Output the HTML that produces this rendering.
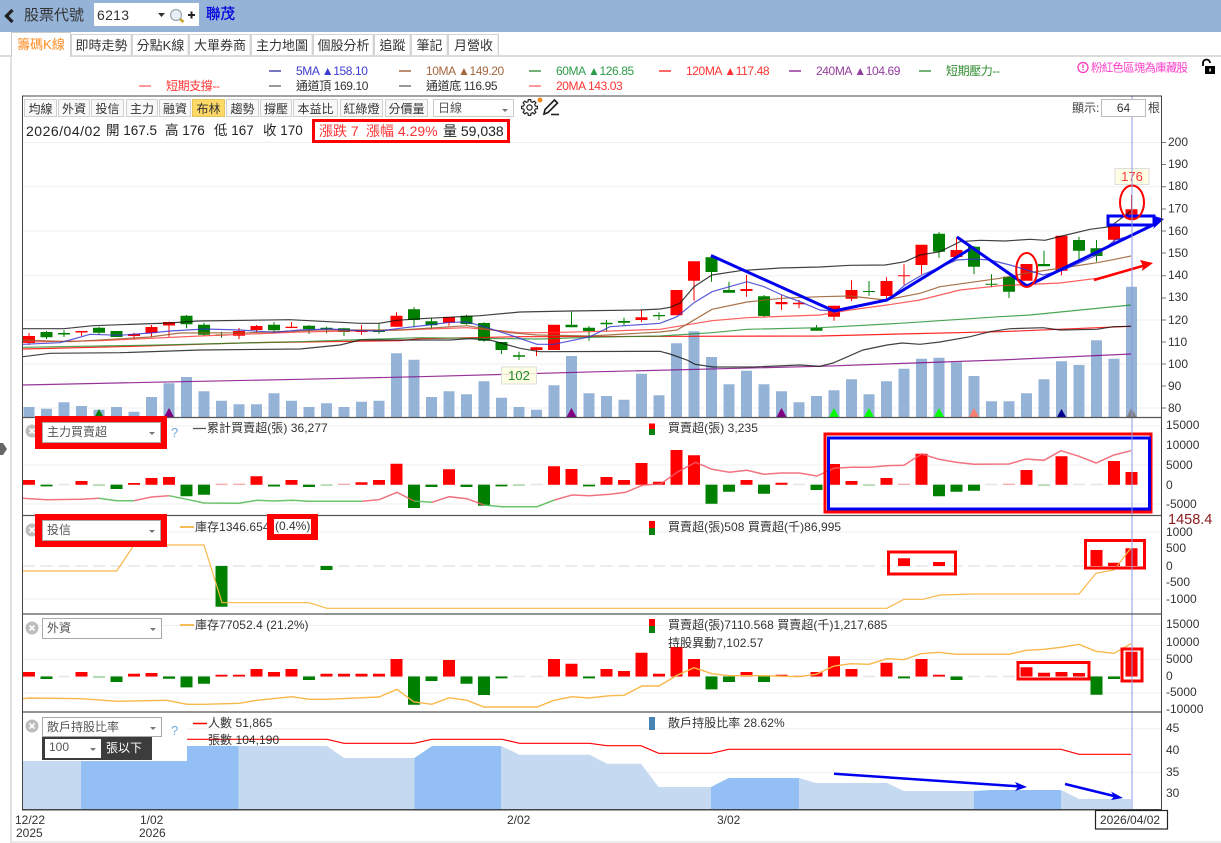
<!DOCTYPE html>
<html lang="zh-Hant"><head><meta charset="utf-8"><title>股票代號 6213 聯茂</title>
<style>
html,body{margin:0;padding:0;background:#fff}
body{width:1221px;height:843px;overflow:hidden;position:relative;font-family:"Liberation Sans","Noto Sans CJK TC",sans-serif;color:#333}
.a{position:absolute;white-space:nowrap}
.tab{position:absolute;top:34px;height:21px;line-height:21px;background:#fff;border:1px solid #d4d4d4;border-bottom:0;box-sizing:border-box;text-align:center;font-size:13px;color:#333;box-shadow:inset -1px 0 0 #eee}
.btn{position:absolute;top:99px;height:18px;line-height:18px;background:#f8f8f8;border:1px solid #d0d0d0;box-sizing:border-box;text-align:center;font-size:12px;color:#333}
.sel{position:absolute;left:42px;width:120px;height:21px;line-height:19px;background:#fff;border:1px solid #a9a9a9;box-sizing:border-box;padding-left:4px;font-size:12px;color:#555}
.sel:after{content:"";position:absolute;right:5px;top:9px;border:3px solid transparent;border-top:3px solid #777}
svg text{font-family:"Liberation Sans","Noto Sans CJK TC",sans-serif}
</style></head><body>
<div class="a" style="left:0;top:0;width:1221px;height:32px;background:#95b3d7"></div>
<svg class="a" style="left:2px;top:9px" width="14" height="15"><path d="M10.500 1L4.500 7L10.500 13" fill="none" stroke="#222" stroke-width="3.300"/></svg>
<div class="a" style="left:24px;top:5px;font-size:15px;line-height:22px;color:#333">股票代號</div>
<div class="a" style="left:94px;top:3px;width:105px;height:23px;background:#fff"></div>
<div class="a" style="left:97px;top:6px;font-size:14px;line-height:18px;color:#333;letter-spacing:.3px">6213</div>
<svg class="a" style="left:155px;top:6px" width="44" height="18"><path d="M3 7h7l-3.500 4z" fill="#333"/><circle cx="21" cy="9" r="5.500" fill="#e8eef5" stroke="#9aa" stroke-width="1.200"/><path d="M25 13l3.500 3" stroke="#c9a227" stroke-width="2.500"/><path d="M33 9h7M36.500 5.500v7" stroke="#222" stroke-width="2"/></svg>
<div class="a" style="left:206px;top:5px;font-size:14.500px;line-height:20px;color:#0000e0;-webkit-text-stroke:.3px #0000e0">聯茂</div>

<div class="a" style="left:0;top:55px;width:1221px;height:2px;background:#dcdcdc"></div>
<div class="a" style="left:10px;top:56px;width:2px;height:787px;background:#e2e2e2"></div>
<div class="a" style="left:12px;top:841px;width:1209px;height:2px;background:#ececec"></div>
<div class="tab" style="left:11px;top:32px;width:60px;height:25px;line-height:23px;color:#ff8a1f;border-color:#ccc;box-shadow:none;z-index:2">籌碼K線</div>
<div class="tab" style="left:71px;width:61px">即時走勢</div>
<div class="tab" style="left:132px;width:57px">分點K線</div>
<div class="tab" style="left:189px;width:62px">大單券商</div>
<div class="tab" style="left:251px;width:62px">主力地圖</div>
<div class="tab" style="left:313px;width:61px">個股分析</div>
<div class="tab" style="left:374px;width:37px">追蹤</div>
<div class="tab" style="left:411px;width:37px">筆記</div>
<div class="tab" style="left:448px;width:51px">月營收</div>

<svg class="a" style="left:0;top:0" width="1221" height="843" viewBox="0 0 1221 843" font-size="12">
<!-- legend -->
<g stroke-width="1.200" fill="none">
<path d="M269 71h12" stroke="#1a1a9a"/><path d="M399 71h12" stroke="#8b4513"/><path d="M529 71h12" stroke="#1a7f1a"/><path d="M659 71h12" stroke="#f00"/><path d="M789 71h12" stroke="#800080"/><path d="M919 71h12" stroke="#1a7f1a"/>
<path d="M139 86h12" stroke="#f55"/><path d="M269 86h12" stroke="#555"/><path d="M399 86h12" stroke="#555"/><path d="M529 86h12" stroke="#f55"/>
</g>
<g letter-spacing="-.4">
<text x="296" y="75" fill="#3b3bd0">5MA ▲158.10</text><text x="426" y="75" fill="#a5673f">10MA ▲149.20</text><text x="556" y="75" fill="#2e9b4a">60MA ▲126.85</text><text x="686" y="75" fill="#f33">120MA ▲117.48</text><text x="816" y="75" fill="#943c9e">240MA ▲104.69</text><text x="946" y="75" fill="#2e8b2e">短期壓力--</text>
<text x="166" y="90" fill="#f33">短期支撐--</text><text x="296" y="90" fill="#333">通道頂 169.10</text><text x="426" y="90" fill="#333">通道底 116.95</text><text x="556" y="90" fill="#f33">20MA 143.03</text>
</g>
<circle cx="1083" cy="67.500" r="5" fill="none" stroke="#ff33bb" stroke-width="1.300"/><path d="M1083 64.500v3.500M1083 69v1.300" stroke="#ff33bb" stroke-width="1.300"/>
<text x="1091" y="71.500" fill="#ff40c8" font-size="11.500" textLength="97">粉紅色區塊為庫藏股</text>
<path d="M1203 66v-3a3.500 3.500 0 0 1 7 0" fill="none" stroke="#000" stroke-width="1.800"/><rect x="1205" y="66" width="10" height="8" fill="#000"/><rect x="1209.300" y="68.500" width="1.500" height="3" fill="#fff"/>

<!-- frame -->
<rect x="22.500" y="95.500" width="1139" height="714.500" fill="#fff"/>
<!-- gridlines -->
<path d="M23 142.500H1161M23 186.700H1161M23 231H1161M23 275.700H1161M23 320H1161M23 364H1161M23 408H1161M23 426H1161M23 465H1161M23 504H1161M23 532H1161M23 599H1161M23 625.500H1161M23 659.500H1161M23 693H1161M23 728.700H1161M23 772.300H1161" stroke="#efefef" fill="none"/>
<!-- volume -->
<path stroke="#95b3d7" stroke-width="11" fill="none" d="M29 417V407M46.500 417V408.700M64 417V402.300M81.500 417V406M99 417V409.700M116.500 417V407M134 417V411.700M151.500 417V397M169 417V383.300M186.500 417V377M204 417V391.300M221.500 417V400.700M239 417V404.300M256.500 417V404.300M274 417V393.300M291.500 417V400.700M309 417V407M326.500 417V403.300M344 417V407M361.500 417V401.700M379 417V400.700M396.500 417V353.300M414 417V359.700M431.500 417V397M449 417V391.300M466.500 417V394.300M484 417V381.300M501.500 417V397.700M519 417V407M536.500 417V409.700M554 417V385.300M571.500 417V356M589 417V393.300M606.500 417V396M624 417V399.700M641.500 417V373.700M659 417V395.300M676.500 417V343.300M694 417V331.300M711.500 417V357M729 417V384.300M746.500 417V370.700M764 417V384.300M781.500 417V391.300M799 417V402.300M816.500 417V396M834 417V390.300M851.500 417V379.300M869 417V394.300M886.500 417V381.300M904 417V368.700M921.500 417V358.700M939 417V357.700M956.500 417V362.300M974 417V376M991.500 417V401.300M1009 417V401.300M1026.500 417V393.300M1044 417V379.300M1061.500 417V361.300M1079 417V365M1096.500 417V340.300M1114 417V358.700M1131.500 417V286.700"/>
<!-- signal triangles -->
<path d="M99 409l4.500 8h-9z" fill="#0a7d0a"/><path d="M169 408l5 9h-10z" fill="#800080"/><path d="M571.500 408l5 9h-10z" fill="#800080"/><path d="M781.500 408l5 9h-10z" fill="#800080"/><path d="M834 408l5 9h-10z" fill="#0f0"/><path d="M869 408l5 9h-10z" fill="#0f0"/><path d="M939 408l5 9h-10z" fill="#0f0"/><path d="M974 408l5 9h-10z" fill="#fa8072"/><path d="M1061.500 409l4.500 8h-9z" fill="#00008b"/><path d="M1131.500 408l5 9h-10z" fill="#808080"/>
<!-- candles wicks -->
<path stroke="#f00" stroke-width="1" fill="none" d="M29 333V345M81.500 331V336M134 332.700V339M151.500 325V337M169 321.700V336.700M239 328V339M256.500 325V332M291.500 322V328.300M361.500 325V335M396.500 312.300V326.700M449 317V325.700M536.500 347V356M641.500 310V322M694 261.300V300.700M746.500 275V296.700M781.500 295.300V310M799 300V308.300M834 305.700V320.700M851.500 280.300V301M886.500 277.300V300M904 264.300V285M921.500 244.700V274.300M956.500 237.300V257M1061.500 235.700V275.300M1114 224V242.700M1131.500 195V219"/>
<path stroke="#f00" stroke-width="12" fill="none" d="M29 336V343M81.500 331V332.500M134 334V336M151.500 327V333M169 322V325.500M239 331V335.700M256.500 326V330M291.500 326.700V328M361.500 330V332M396.500 315.700V326.700M449 317V322.700M536.500 347.300V350M554 324.700V350M641.500 317.300V320M676.500 290V315.300M694 261.300V280.700M746.500 289V291M781.500 302V304.300M799 302.700V304.300M834 305.700V316.700M851.500 290V298.700M886.500 281V296M904 275.300V276.300M921.500 244.700V265M956.500 250V257M1026.500 264V280.700M1061.500 235.700V270.700M1114 224V239.700M1131.500 209.300V219"/>
<path stroke="#008000" stroke-width="1" fill="none" d="M46.500 331V339M64 330.300V337M99 326.700V335M116.500 331V337M186.500 315V328.300M204 322.700V336M221.500 331.700V337.700M274 322V332.700M309 325V334M326.500 326.700V333.300M344 327.700V336M379 323.300V333.700M414 307.300V326.700M431.500 317.700V329.300M466.500 314.700V324.700M484 322.300V341.700M501.500 342V354M519 351.700V360M571.500 311.700V327.300M589 326V340.700M606.500 320V331.700M624 317.700V325.700M659 312.300V320M711.500 257.300V281.700M729 281.700V292.700M764 295V317.300M816.500 325V330.700M869 281V295.700M939 232V257.700M974 246V274.300M991.500 274.300V287.300M1009 276.700V298M1044 250.700V266.300M1079 236.700V261.700M1096.500 240V261.700"/>
<path stroke="#008000" stroke-width="12" fill="none" d="M46.500 332V337.300M64 333V334.500M99 327.700V332.700M116.500 331V337M186.500 315.700V324.300M204 324.700V334.700M221.500 334.500V335.500M274 324.700V330.300M309 325.700V329.300M326.500 327.700V329M344 328.300V332M379 331V332M414 309.300V320M431.500 321.300V325.300M466.500 315.700V324M484 323V340.700M501.500 342V350M519 355.300V356.700M571.500 324.700V327.300M589 327.700V331M606.500 322.700V324.300M624 321V322.700M659 315V316.300M711.500 257.300V272M729 290V292.700M764 296.300V316M816.500 327.700V330.700M869 291V292M939 233.700V251.700M974 246.700V266.700M991.500 283.700V284.700M1009 276.700V291.700M1044 264V266.300M1079 240V250.700M1096.500 248.300V256"/>
<!-- MA & Bollinger lines -->
<g fill="none" stroke-width="1.200">
<path stroke="#800080" opacity=".8" d="M23 385L150 382.300L300 379.300L420 376.700L600 371.700L820 366.300L1000 360L1131 354"/>
<path stroke="#f00" opacity=".85" d="M23 349L120 346.700L250 342.700L400 340.700L420 338.700L520 336.700L820 336L900 334L1000 331.700L1131 326.300"/>
<path stroke="#1f8f2a" opacity=".8" d="M23 347.300L160 345L300 341.700L400 338.300L420 337.700L540 339L590 337.300L660 336L712 332.700L747 329.300L820 327.700L900 323.300L1000 316.700L1030 315L1131 305"/>
<path stroke="#f33" opacity=".8" d="M23 342L100 340.700L200 336L300 332L400 330L467 327.700L520 332.700L537 332.700L590 331.700L660 329.300L712 320.700L747 317.700L820 315L850 310L887 305L920 300L960 290L1000 285.700L1060 283L1097 278.300L1131 270"/>
<path stroke="#9a5a2a" opacity=".85" d="M23 340L70 341.700L150 337L180 333L250 332.700L320 330L400 330L467 325.700L510 332.700L537 335L590 336L660 332L677 330L712 309.300L747 302L782 298.300L820 296.700L850 296L885 300L920 293.300L940 286.700L1000 278.300L1027 273L1062 268L1097 262.700L1115 259.300L1131 256"/>
<path stroke="#3030d0" opacity=".8" d="M23 344.300L60 342.700L70 340L90 334.300L120 335.300L150 333L170 331L205 329L240 330L275 332.300L300 330L330 329L360 330.700L380 331L400 328.300L420 326L450 322.300L467 322L484 326.700L510 335L537 344.300L554 344.300L590 336.700L610 326.700L660 323.300L677 316.700L694 302.700L712 291.700L747 281.700L764 286.700L782 295L800 301.700L820 310L834 311L887 300.700L905 285L922 275L957 260L974 259L990 260L1010 265L1027 270L1043 275L1062 270.700L1097 255L1115 240L1131 235.600"/>
<path stroke="#111" opacity=".8" d="M23 328.700L64 328.700L93 325.700L169 323L198 321L290 319.700L360 323.300L379 323.300L397 320.300L420 318.700L480 315.700L520 312L570 311L640 310L660 309L670 307.300L680 303.300L694 286.700L712 275L740 270.700L780 268L820 267L850 265.300L885 265L905 261.700L920 255L940 251.700L960 241.700L980 240.300L1005 241L1030 239.300L1045 240.300L1062 236L1090 229.300L1110 226.700L1131 211"/>
<path stroke="#111" opacity=".8" d="M23 356.700L50 353.300L120 352.700L200 350L300 349L340 345L360 340L450 340L470 338.700L490 340L520 348.300L540 351.700L660 351.300L670 354L687 360L695 364.300L713 367L753 367L800 365L820 366.300L833 363L863 350L887 345L902 343L920 344.300L940 342L970 336.700L990 331.700L1010 328.700L1043 327.700L1060 330L1097 329.300L1113 326.700L1131 326.300"/>
</g>
<!-- tooltips -->
<rect x="501.500" y="367" width="35" height="17" fill="#ffffe0" fill-opacity=".85" stroke="#ddd"/><text x="519" y="380" fill="#1d8a2a" font-size="13" text-anchor="middle">102</text>
<rect x="1115" y="168.500" width="34" height="16" fill="#ffffe6" stroke="#ddd"/><text x="1132" y="181" fill="#f33" font-size="13" text-anchor="middle">176</text>
<!-- blue annotations -->
<g fill="none" stroke="#0000f0">
<path stroke-width="3" d="M711 255.500L834 311L887 300L970 249"/>
<path stroke-width="3" d="M957 237L1027 286L1157 223"/>
<path fill="#0000f0" stroke="none" d="M1164 219L1151 215L1156 223L1153 229z"/>
<rect x="1108" y="216" width="46" height="9" stroke-width="3"/>
</g>
<g fill="none" stroke="#f00" stroke-width="2"><ellipse cx="1132" cy="202.500" rx="12" ry="17"/><ellipse cx="1026.700" cy="270" rx="10.500" ry="17"/></g>
<path d="M1094 280L1146 265" stroke="#f00" stroke-width="2.500" fill="none"/><path d="M1153 263L1140 260L1143 266L1142 271z" fill="#f00"/>

<!-- panel 1 -->
<path stroke="#e6e6e6" stroke-width="1.500" stroke-dasharray="12 5.500" d="M23 484.500H1132" fill="none"/>
<path stroke="#f00" stroke-width="12" fill="none" d="M29 480V484.700M81.500 481V484.700M134 483V484.700M151.500 478V484.700M169 477V484.700M256.500 476.300V484.700M291.500 480V484.700M361.500 482.300V484.700M379 480V484.700M396.500 463.700V484.700M449 469.300V484.700M554 466.300V484.700M571.500 469V484.700M606.500 477V484.700M624 480V484.700M641.500 463V484.700M659 481.700V484.700M676.500 450V484.700M694 455.300V484.700M746.500 480V484.700M781.500 482.700V484.700M834 464V484.700M851.500 481V484.700M886.500 478V484.700M921.500 453.700V484.700M1026.500 470V484.700M1061.500 456.300V484.700M1114 461V484.700M1131.500 472V484.700"/>
<path stroke="#ff9a9a" stroke-width="12" fill="none" d="M221.500 483.700V484.700M239 483.700V484.700M344 483.700V484.700M904 483.700V484.700M1009 483.700V484.700"/>
<path stroke="#008000" stroke-width="12" fill="none" d="M46.500 484.700V486.400M116.500 484.700V489M186.500 484.700V496.300M204 484.700V494.700M274 484.700V486.500M309 484.700V487M414 484.700V508M431.500 484.700V487M466.500 484.700V487M484 484.700V505.700M501.500 484.700V486.400M589 484.700V486.400M711.500 484.700V503.700M729 484.700V491.700M764 484.700V493.700M816.500 484.700V490M939 484.700V496.300M956.500 484.700V491.700M974 484.700V490.700"/>
<path stroke="#8fd08f" stroke-width="12" fill="none" d="M99 484.700V485.700M326.500 484.700V485.700M519 484.700V485.700M869 484.700V485.700M1044 484.700V485.700"/>
<g fill="none" stroke-width="1.500">
<path stroke="#f05a6a" opacity=".85" d="M23 498.300L46.500 499.700L81.500 499.300L99 498.300M134 500.700L151.500 497L169 495.700M362 501.300L379 499.700L397 492.300L414 501M432 502.300L449 496.700L467 498.700L484 505M554.500 500L572 495L589.500 495.700L610 494.300L625.600 492.300L643 485L660.600 484L678 471.700L695.600 462.300L712 469.300L729.500 472.300L747 470.300L764 474.300L781 473L799 473L817 476L834 468.300L851 467.300L869.500 467.300L886.600 465.700L904 465.300L921.700 454L939 459.300L956 462.300L974 464.300L1009 464L1026 459L1044 460.300L1061 450.700L1079 456.300L1096 463L1114 455L1131 450.700"/>
<path stroke="#5cbd5c" opacity=".9" d="M99 498.300L116.700 500.700L134 500.700M169 495.700L186.800 499.300L204 503L239 503.300L256.800 500.300L274 501L292 500.300L309 501.300L362 501.300M414 501L432 502.300M484 505L502 506.700L537 506.700L554.500 500"/>
</g>
<g fill="none"><rect x="825" y="434" width="326" height="78" stroke="#f00" stroke-width="3"/><rect x="828.500" y="438" width="321" height="71" stroke="#0000f0" stroke-width="3"/></g>

<!-- panel 2 -->
<path stroke="#e6e6e6" stroke-width="1.500" stroke-dasharray="12 5.500" d="M23 566H1132" fill="none"/>
<path stroke="#008000" stroke-width="12" fill="none" d="M221.500 566V606.700M326.500 566V570"/>
<path stroke="#f00" stroke-width="12" fill="none" d="M904 558.300V566M939 562V566M1096.500 550V566M1114 562.700V566M1131.500 548.300V566"/>
<path stroke="#f9b84a" stroke-width="1.200" fill="none" d="M23 571L116.700 571L134 545L204 545L222 602.700L309 602.700L327 608.300L887 608.300L904 599.300L923 599.300L940 595L974 594L1079 594L1096 573.300L1114 570L1131 548"/>
<g fill="none" stroke="#f00" stroke-width="3"><rect x="888.500" y="552" width="67" height="22"/><rect x="1085.500" y="540.500" width="59" height="27.500"/></g>

<!-- panel 3 -->
<path stroke="#e6e6e6" stroke-width="1.500" stroke-dasharray="12 5.500" d="M23 676.500H1132" fill="none"/>
<path stroke="#f00" stroke-width="12" fill="none" d="M29 672V676.500M81.500 672V676.500M134 673.700V676.500M151.500 673V676.500M221.500 674.700V676.500M239 674.700V676.500M256.500 669V676.500M274 672V676.500M291.500 669V676.500M326.500 673.700V676.500M344 673.700V676.500M361.500 673.700V676.500M379 673.700V676.500M396.500 659V676.500M449 660V676.500M554 659V676.500M571.500 663.700V676.500M606.500 669V676.500M624 671V676.500M641.500 652.700V676.500M659 673.700V676.500M676.500 647V676.500M694 659V676.500M746.500 672V676.500M781.500 674.700V676.500M816.500 672V676.500M834 656.300V676.500M851.500 669V676.500M886.500 662.700V676.500M921.500 659V676.500M939 674.700V676.500M1026.500 667.300V676.500M1044 672.700V676.500M1061.500 672V676.500M1079 673V676.500M1131.500 651.700V676.500"/>
<path stroke="#ff9a9a" stroke-width="12" fill="none" d="M799 675.500V676.500"/>
<path stroke="#008000" stroke-width="12" fill="none" d="M46.500 676.500V679M116.500 676.500V682M169 676.500V678.700M186.500 676.500V687.400M204 676.500V683.700M309 676.500V680M414 676.500V704.700M431.500 676.500V681M466.500 676.500V683.700M484 676.500V695M501.500 676.500V678.400M589 676.500V678.400M711.500 676.500V689.400M729 676.500V682M764 676.500V682M904 676.500V678.400M956.500 676.500V680M1096.500 676.500V694.700M1114 676.500V679"/>
<path stroke="#8fd08f" stroke-width="12" fill="none" d="M99 676.500V677.700"/>
<path stroke="#f9b84a" stroke-width="1.400" fill="none" d="M23 698.700L29 698L82 698.700L117 701.300L167 700.300L187 704.300L204 704.300L239 703.300L257 700.300L292 696.700L309 699.300L327 699.300L379 697L397 689.300L414 702L432 704.300L449 697.700L467 700.300L484 707L537 707L554 700.300L572 696.700L589 698L610 695.700L624 695.300L642 686L659 686L677 675.300L694 667.700L712 673.700L729 675.700L764 675.700L799 676.700L816 674.300L834 666L851 663.700L869 664.300L887 658.700L904 659.700L921 653.700L939 652.300L956 654.300L1009 654.300L1026 650.300L1044 649.300L1061 647.300L1079 644.300L1096 651.300L1114 653.300L1131 643.700"/>
<g fill="none" stroke="#f00" stroke-width="3"><rect x="1018" y="662.500" width="71" height="16.500"/><rect x="1122" y="649" width="20" height="32"/></g>

<!-- panel 4 area -->
<path fill="#c5d9f1" d="M23 761H81V809H23zM238.500 746H327L344 758H414.400V809H238.500zM501 746L519.500 754.700H589.500L607 763.700H641L658.600 787H711V809H501zM799 778L816 783H887L904 791H973.800V809H799zM1061 790L1079 799H1131V809H1061z"/>
<path fill="#93bff5" d="M81 761H187V746H238.500V809H81zM414.400 758L432 746H501V809H414.400zM711 787L728.700 778H799V809H711zM973.800 791L991 790H1061V809H973.800z"/>
<path fill="none" stroke="#f00" stroke-width="1.200" d="M187 739.300L327 739.300L344 743.300L414 743.300L432 739.300L502 739.300L519.500 743.300L589.500 743.300L607 745.700L641 745.700L658.600 753.300L711 753.300L728.700 749.300L1061 749.300L1079 754.300L1131 754.300"/>
<g fill="none" stroke="#0000f0" stroke-width="2.500"><path d="M834 773.700L1020 786.500"/><path d="M1065 784L1116 796.500"/></g>
<path fill="#0000f0" d="M1027 787L1015 782L1018 787L1015 791zM1123 798L1111 791.500L1114 796.500L1111 800z"/>

<!-- crosshair -->
<path d="M1132 96V810" stroke="#8c9be0" stroke-width="1" fill="none"/>

<!-- frame lines -->
<path d="M22.500 96H1161.500V810H22.500z" fill="none" stroke="#444" stroke-width="1"/>
<path d="M23 417.500H1161M23 515.500H1161M23 614H1161M23 712H1161" stroke="#555" stroke-width="1.200" fill="none"/>
<path d="M23 809.700H1161" stroke="#444" stroke-width="1.500" fill="none"/>
<path d="M1162 142.500h4M1162 164.500h4M1162 186.700h4M1162 209h4M1162 231h4M1162 253h4M1162 275.700h4M1162 298h4M1162 320h4M1162 342h4M1162 364h4M1162 386h4M1162 408h4" stroke="#777" fill="none"/>

<!-- axis -->
<g fill="#333" font-size="12">
<text x="1168" y="146">200</text><text x="1168" y="168">190</text><text x="1168" y="190">180</text><text x="1168" y="212.500">170</text><text x="1168" y="235">160</text><text x="1168" y="257">150</text><text x="1168" y="279">140</text><text x="1168" y="301">130</text><text x="1168" y="324">120</text><text x="1168" y="346">110</text><text x="1168" y="368">100</text><text x="1168" y="390">90</text><text x="1168" y="412">80</text>
<text x="1166" y="429">15000</text><text x="1166" y="449">10000</text><text x="1166" y="469">5000</text><text x="1166" y="489">0</text><text x="1166" y="508">-5000</text>
<text x="1166" y="536">1000</text><text x="1166" y="552">500</text><text x="1166" y="570">0</text><text x="1166" y="586">-500</text><text x="1166" y="603">-1000</text>
<text x="1166" y="628">15000</text><text x="1166" y="646">10000</text><text x="1166" y="663">5000</text><text x="1166" y="680">0</text><text x="1166" y="696">-5000</text><text x="1166" y="713">-10000</text>
<text x="1166" y="732">45</text><text x="1166" y="754">40</text><text x="1166" y="776">35</text><text x="1166" y="797">30</text>
<text x="15" y="824">12/22</text><text x="16" y="837">2025</text><text x="140" y="824">1/02</text><text x="139" y="837">2026</text><text x="507" y="824">2/02</text><text x="717" y="824">3/02</text>
</g>
<rect x="1166" y="512" width="52" height="14" fill="#fff"/><text x="1168" y="524" fill="#8b1a1a" font-size="14.500">1458.4</text>
<rect x="1095.500" y="810.500" width="72" height="18.500" fill="#fff" stroke="#222" stroke-width="1.200"/><text x="1100" y="824" fill="#333" font-size="12">2026/04/02</text>

<!-- panel titles -->
<g font-size="12" fill="#333" letter-spacing=".05">
<text x="207" y="432">累計買賣超(張) 36,277</text><text x="668" y="432">買賣超(張) 3,235</text>
<text x="195" y="531">庫存1346.654</text><text x="668" y="531">買賣超(張)508 買賣超(千)86,995</text>
<text x="195" y="629">庫存77052.4 (21.2%)</text><text x="668" y="629">買賣超(張)7110.568 買賣超(千)1,217,685</text><text x="668" y="647">持股異動7,102.57</text>
<text x="208" y="727">人數 51,865</text><text x="208" y="744">張數 104,190</text><text x="668" y="727">散戶持股比率 28.62%</text>
</g>
<path d="M193 428.500h13" stroke="#555" stroke-width="1.300"/><path d="M180 527h14M180 625h14" stroke="#f5a623" stroke-width="1.500"/><path d="M193 723.500h14" stroke="#f00" stroke-width="1.500"/>
<path d="M652 423.500v5.500" stroke="#f00" stroke-width="6"/><path d="M652 429v6" stroke="#108010" stroke-width="6"/>
<path d="M652 521v7" stroke="#f00" stroke-width="6"/><path d="M652 528v7" stroke="#108010" stroke-width="6"/>
<path d="M652 619v7" stroke="#f00" stroke-width="6"/><path d="M652 626v7" stroke="#108010" stroke-width="6"/>
<path d="M652 717v13" stroke="#4682b4" stroke-width="6"/>
<!-- close icons -->
<g><circle cx="32" cy="431" r="6.500" fill="#bdbdbd"/><path d="M29.500 428.500l5 5m0-5l-5 5" stroke="#fff" stroke-width="1.600"/>
<circle cx="32" cy="530" r="6.500" fill="#bdbdbd"/><path d="M29.500 527.500l5 5m0-5l-5 5" stroke="#fff" stroke-width="1.600"/>
<circle cx="32" cy="628" r="6.500" fill="#bdbdbd"/><path d="M29.500 625.500l5 5m0-5l-5 5" stroke="#fff" stroke-width="1.600"/></g>
<text x="171" y="437" fill="#6fa8dc" font-size="13">?</text>
<!-- gear + pen -->
<g transform="translate(529.500 107.500)" fill="none" stroke="#222" stroke-width="1.200" stroke-linejoin="round"><circle r="2.600"/><polygon points="5.820,-1.450 7.900,-1.250 7.900,1.250 5.820,1.450 5.140,3.090 6.470,4.700 4.700,6.470 3.090,5.140 1.450,5.820 1.250,7.900 -1.250,7.900 -1.450,5.820 -3.090,5.140 -4.700,6.470 -6.470,4.700 -5.140,3.090 -5.820,1.450 -7.900,1.250 -7.900,-1.250 -5.820,-1.450 -5.140,-3.090 -6.470,-4.700 -4.700,-6.470 -3.090,-5.140 -1.450,-5.820 -1.250,-7.900 1.250,-7.900 1.450,-5.820 3.090,-5.140 4.700,-6.470 6.470,-4.700 5.140,-3.090"/></g>
<circle cx="540" cy="100" r="2.500" fill="#f58a1f"/>
<path d="M544 114l1-4.500L554.500 100l3 3L548 112.500z" fill="none" stroke="#222" stroke-width="1.700"/><path d="M551 114.500h8" stroke="#222" stroke-width="1.600"/>
<!-- left arrow -->
<path d="M0 443h3l4 6l-4 6h-3z" fill="#666"/>
</svg>

<!-- toolbar -->
<div class="btn" style="left:24px;width:33px">均線</div>
<div class="btn" style="left:58px;width:32px">外資</div>
<div class="btn" style="left:91px;width:33px">投信</div>
<div class="btn" style="left:126px;width:32px">主力</div>
<div class="btn" style="left:159px;width:32px">融資</div>
<div class="btn" style="left:192px;width:33px;background:#ffd966;border-color:#e6c35c">布林</div>
<div class="btn" style="left:226px;width:33px">趨勢</div>
<div class="btn" style="left:260px;width:32px">撐壓</div>
<div class="btn" style="left:293px;width:45px">本益比</div>
<div class="btn" style="left:340px;width:43px">紅綠燈</div>
<div class="btn" style="left:385px;width:43px">分價量</div>
<div class="sel" style="left:433px;top:99px;width:81px;height:18px;line-height:16px;border-color:#ccc">日線</div>
<div class="a" style="left:1072px;top:100px;font-size:12px;line-height:16px;color:#444">顯示:</div>
<div class="a" style="left:1101px;top:99px;width:45px;height:18px;box-sizing:border-box;border:1px solid #bbb;background:#fff;text-align:center;font-size:12px;line-height:16px;color:#333">64</div>
<div class="a" style="left:1148px;top:100px;font-size:12px;line-height:16px;color:#444">根</div>

<!-- info row -->
<div class="a" style="left:26px;top:122px;font-size:14px;line-height:18px;color:#222;letter-spacing:.5px">2026/04/02</div>
<div class="a" style="left:106px;top:122px;font-size:13.500px;line-height:18px;color:#222">開 167.5</div>
<div class="a" style="left:165px;top:122px;font-size:13.500px;line-height:18px;color:#222">高 176</div>
<div class="a" style="left:214px;top:122px;font-size:13.500px;line-height:18px;color:#222">低 167</div>
<div class="a" style="left:263px;top:122px;font-size:13.500px;line-height:18px;color:#222">收 170</div>
<div class="a" style="left:312px;top:119px;width:198px;height:24px;border:3px solid #f00;box-sizing:border-box"></div>
<div class="a" style="left:319px;top:122px;font-size:14px;line-height:18px;color:#f33">漲跌 7</div>
<div class="a" style="left:366px;top:122px;font-size:14px;line-height:18px;color:#f33">漲幅 4.29%</div>
<div class="a" style="left:443px;top:122px;font-size:14px;line-height:18px;color:#222">量 59,038</div>

<!-- panel selectors -->
<div class="a" style="left:35px;top:416px;width:132px;height:33px;box-sizing:border-box;border:7px solid #f00;border-top-width:6px;border-right-width:6px"></div>
<div class="sel" style="top:422px;left:42px;width:119px;border:1px solid #aaa">主力買賣超</div>
<div class="a" style="left:35px;top:514px;width:132px;height:33px;box-sizing:border-box;border:7px solid #f00;border-top-width:6px;border-right-width:6px"></div>
<div class="sel" style="top:520px;left:42px;width:119px">投信</div>
<div class="a" style="left:267px;top:514px;width:51px;height:26px;box-sizing:border-box;border:7px solid #f00;border-top-width:5px;border-bottom-width:6px;background:#fff"></div>
<div class="a" style="left:275px;top:519px;font-size:12px;line-height:15px;color:#333">(0.4%)</div>
<div class="sel" style="top:618px;width:120px">外資</div>
<div class="a" style="left:23px;top:713px;width:164px;height:48px;background:#fff"></div>
<div class="sel" style="top:717px;width:120px;height:20px;line-height:18px">散戶持股比率</div>
<div class="a" style="left:42px;top:737px;width:110px;height:23px;background:#3c3c3c"></div>
<div class="sel" style="left:45px;top:739px;width:56px;height:19px;line-height:17px;border:0;font-size:12px">100</div>
<div class="a" style="left:106px;top:740px;font-size:12px;line-height:17px;color:#fff">張以下</div>
<svg class="a" style="left:171px;top:722px" width="12" height="18"><text x="0" y="13" fill="#6fa8dc" font-size="13">?</text></svg>
<svg class="a" style="left:25px;top:719px" width="14" height="14"><circle cx="7" cy="7" r="6.500" fill="#bdbdbd"/><path d="M4.500 4.500l5 5m0-5l-5 5" stroke="#fff" stroke-width="1.600"/></svg>
</body></html>
